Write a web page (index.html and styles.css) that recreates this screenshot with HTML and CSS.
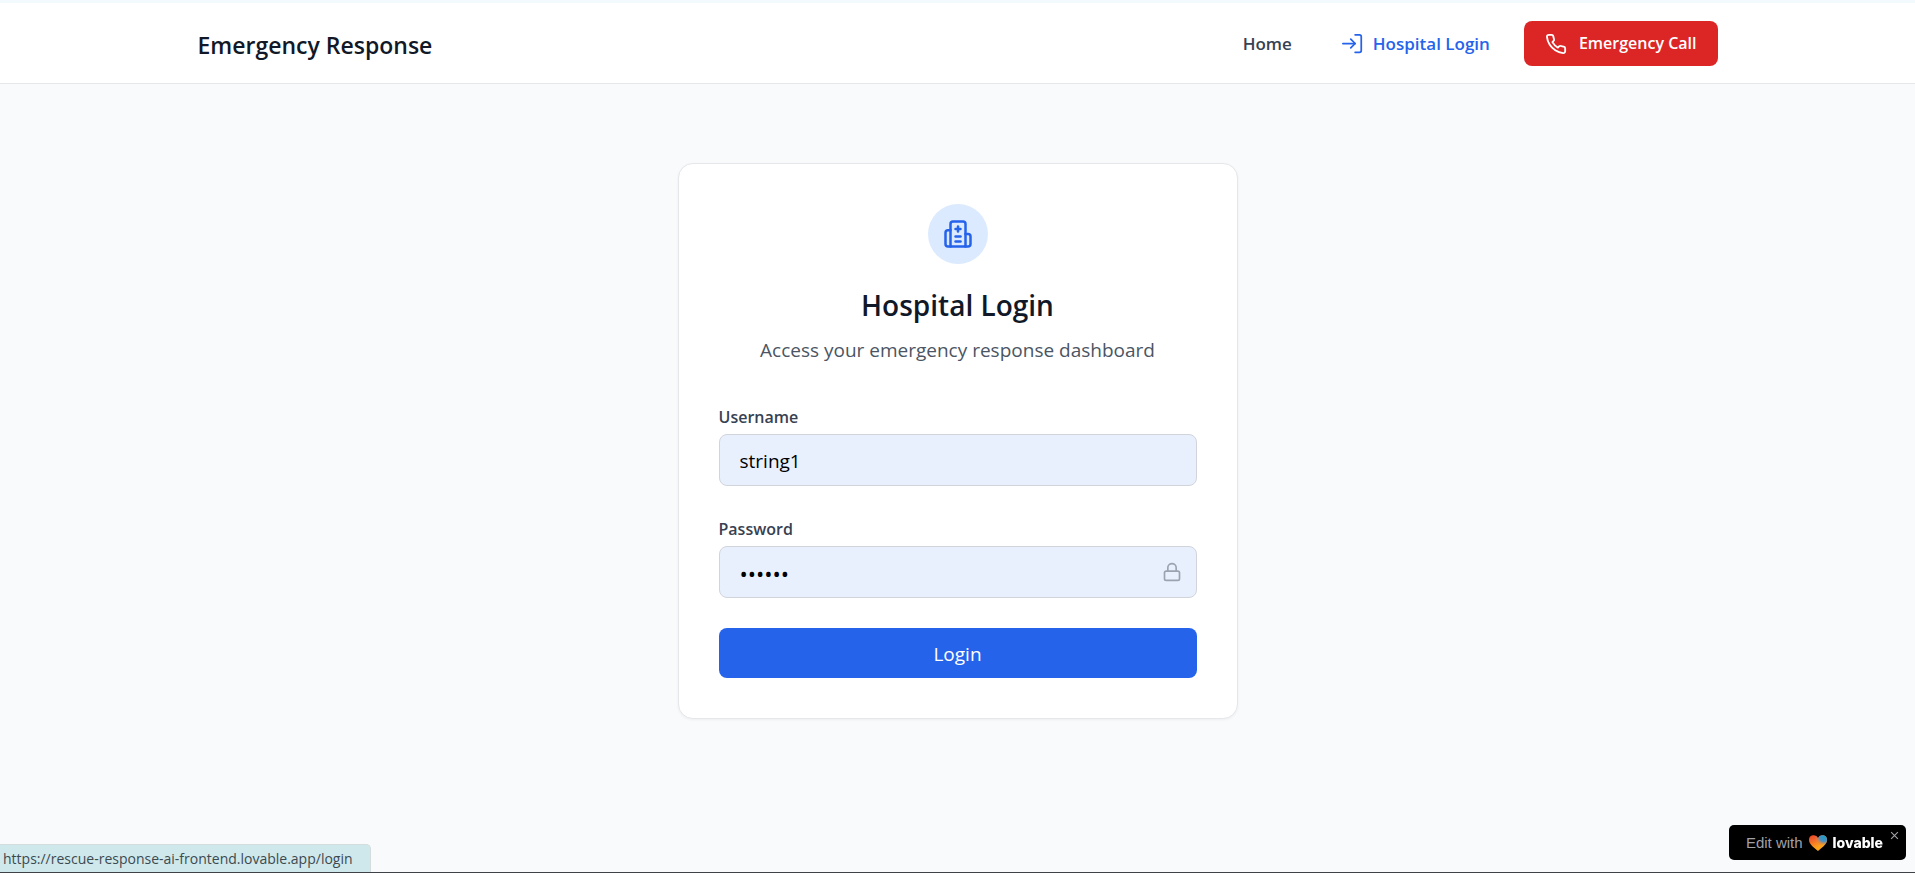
FILE: index.html
```html
<!DOCTYPE html>
<html lang="en">
<head>
<meta charset="utf-8">
<meta name="viewport" content="width=device-width, initial-scale=1">
<title>Hospital Login - Emergency Response</title>
<link rel="stylesheet" href="styles.css">
</head>
<body>
<header class="header">
  <div class="header-inner">
    <a class="brand" href="#">Emergency Response</a>
    <nav class="nav">
      <a class="nav-link" href="#">Home</a>
      <a class="nav-link nav-link-active" href="#">
        <svg class="icon icon-login" viewBox="0 0 24 24" aria-hidden="true"><path d="M15 2h5a2 2 0 0 1 2 2v16a2 2 0 0 1-2 2h-5"/><path d="m10 17 5-5-5-5"/><path d="M15 12H1"/></svg>
        <span>Hospital Login</span>
      </a>
      <button class="call-button" type="button">
        <svg class="icon icon-phone" viewBox="0 0 24 24" aria-hidden="true"><path d="M22 16.92v3a2 2 0 0 1-2.18 2 19.79 19.79 0 0 1-8.63-3.07 19.5 19.5 0 0 1-6-6 19.79 19.79 0 0 1-3.07-8.67A2 2 0 0 1 4.11 2h3a2 2 0 0 1 2 1.72 12.84 12.84 0 0 0 .7 2.81 2 2 0 0 1-.45 2.11L8.09 9.91a16 16 0 0 0 6 6l1.27-1.27a2 2 0 0 1 2.11-.45 12.84 12.84 0 0 0 2.81.7A2 2 0 0 1 22 16.92z"/></svg>
        <span>Emergency Call</span>
      </button>
    </nav>
  </div>
</header>
<main class="main">
  <section class="card">
    <div class="card-icon">
      <svg class="icon icon-hospital" viewBox="0 0 24 24" aria-hidden="true"><path d="M6 22V4a2 2 0 0 1 2-2h8a2 2 0 0 1 2 2v18Z"/><path d="M6 9H4a2 2 0 0 0-2 2v9a2 2 0 0 0 2 2h2"/><path d="M18 12h2a2 2 0 0 1 2 2v6a2 2 0 0 1-2 2h-2"/><path d="M10 14h4"/><path d="M10 18h4"/><path d="M12 6v4"/><path d="M10 8h4"/></svg>
    </div>
    <h1 class="card-title">Hospital Login</h1>
    <p class="card-text">Access your emergency response dashboard</p>
    <form class="form">
      <div class="field">
        <label class="label" for="username">Username</label>
        <input class="input" id="username" type="text" value="string1">
      </div>
      <div class="field">
        <label class="label" for="password">Password</label>
        <div class="input-wrap">
          <input class="input input-password" id="password" type="password" value="string">
          <svg class="icon icon-lock" viewBox="0 0 24 24" aria-hidden="true"><rect x="3" y="11" width="18" height="11" rx="2"/><path d="M7 11V7a5 5 0 0 1 10 0v4"/></svg>
        </div>
      </div>
      <button class="submit" type="button">Login</button>
    </form>
  </section>
</main>
<div class="status">https://rescue-response-ai-frontend.lovable.app/login</div>
<aside class="badge">
  <a class="badge-link" href="#">
    <span>Edit with</span>
    <svg class="heart" viewBox="0 0 18 16" aria-hidden="true">
      <defs>
        <linearGradient id="warm" x1="0" y1="0" x2="0.5" y2="1"><stop offset="0" stop-color="#ef4423"/><stop offset="0.3" stop-color="#f0602c"/><stop offset="0.8" stop-color="#fba21c"/></linearGradient>
        <radialGradient id="cool" gradientUnits="userSpaceOnUse" cx="15" cy="2" r="9"><stop offset="0" stop-color="#1d9fc4"/><stop offset="0.5" stop-color="#4d8fc0"/><stop offset="1" stop-color="#f08a4a" stop-opacity="0"/></radialGradient>
      </defs>
      <path fill="url(#warm)" d="M9 16C6 13.500 0 9.500 0 5a4.700 4.700 0 0 1 9-2 4.700 4.700 0 0 1 9 2c0 4.500-6 8.500-9 11Z"/>
      <path fill="url(#cool)" d="M9 16C6 13.500 0 9.500 0 5a4.700 4.700 0 0 1 9-2 4.700 4.700 0 0 1 9 2c0 4.500-6 8.500-9 11Z"/>
    </svg>
    <strong class="badge-name">lovable</strong>
  </a>
  <button class="badge-close" type="button" aria-label="Close"><svg class="close-icon" viewBox="0 0 8 8" aria-hidden="true"><path d="M1 1l6 6M7 1L1 7"/></svg></button>
</aside>
</body>
</html>
```
FILE: styles.css
```css
* {
  box-sizing: border-box;
}

body {
  margin: 0;
  min-height: 100vh;
  display: flex;
  flex-direction: column;
  background: #f9fafb;
  border-bottom: 1px solid #3f4347;
  color: #111827;
  font-family: "Open Sans", "Noto Sans", sans-serif;
}

a {
  color: inherit;
  text-decoration: none;
}

button,
input {
  font-family: inherit;
}

.icon {
  flex: none;
  fill: none;
  stroke: currentColor;
  stroke-width: 2;
  stroke-linecap: round;
  stroke-linejoin: round;
}

.header {
  background: #fff;
  border-top: 3px solid #f3fafd;
  border-bottom: 1px solid #e5e7eb;
}

.header-inner {
  display: flex;
  align-items: center;
  justify-content: space-between;
  max-width: 1600px;
  margin: 0 auto;
  padding: 18px 40px 17px;
}

.brand {
  padding-top: 3px;
  font-size: 23px;
  font-weight: 600;
  line-height: 35px;
}

.nav {
  display: flex;
  align-items: center;
}

.nav-link {
  display: flex;
  align-items: center;
  gap: 10px;
  margin-right: 50px;
  color: #374151;
  font-size: 17px;
  font-weight: 600;
  line-height: 25px;
}

.nav-link-active {
  margin-right: 34px;
  color: #2563eb;
}

.icon-login {
  width: 21px;
  height: 21px;
}

.call-button {
  display: flex;
  align-items: center;
  gap: 12px;
  padding: 10px 21px;
  border: 0;
  border-radius: 8px;
  background: #dc2626;
  color: #fff;
  font-size: 16px;
  font-weight: 600;
  line-height: 25px;
}

.icon-phone {
  width: 22px;
  height: 22px;
}

.main {
  flex: 1;
  padding: 79px 20px;
}

.card {
  max-width: 560px;
  margin: 0 auto;
  padding: 40px;
  background: #fff;
  border: 1px solid #e5e7eb;
  border-radius: 15px;
  box-shadow: 0 1px 3px rgba(0, 0, 0, 0.05);
}

.card-icon {
  display: flex;
  align-items: center;
  justify-content: center;
  width: 60px;
  height: 60px;
  margin: 0 auto 20px;
  border-radius: 50%;
  background: #dbeafe;
  color: #2563eb;
}

.icon-hospital {
  width: 30px;
  height: 30px;
}

.card-title {
  margin: 0 0 9px;
  font-size: 28px;
  font-weight: 600;
  line-height: 42px;
  text-align: center;
}

.card-text {
  margin: 0 0 39px;
  color: #4b5563;
  font-size: 19px;
  line-height: 30px;
  text-align: center;
}

.form {
  display: flex;
  flex-direction: column;
  gap: 30px;
}

.field {
  display: flex;
  flex-direction: column;
  gap: 4px;
}

.label {
  color: #374151;
  font-size: 16px;
  font-weight: 600;
  line-height: 26px;
}

.input {
  display: block;
  width: 100%;
  height: 52px;
  padding: 2px 20px 0;
  border: 1px solid #d1d5db;
  border-radius: 8px;
  background: #e8f0fe;
  color: #000;
  font-size: 19px;
}

.input-password {
  font-size: 22px;
}

.input-wrap {
  position: relative;
}

.icon-lock {
  position: absolute;
  top: 16px;
  right: 15px;
  width: 20px;
  height: 20px;
  color: #9ca3af;
}

.submit {
  padding: 11px 20px 9px;
  border: 0;
  border-radius: 8px;
  background: #2563eb;
  color: #fff;
  font-size: 19px;
  line-height: 30px;
}

.status {
  position: fixed;
  bottom: 1px;
  left: 0;
  padding: 0 17px 0 3px;
  border: 1px solid #d5dcde;
  border-width: 1px 1px 0 0;
  border-radius: 0 5px 0 0;
  background: #cfe8ec;
  color: #3c4a50;
  font-size: 14px;
  line-height: 27px;
}

.badge {
  position: fixed;
  right: 9px;
  bottom: 13px;
  display: flex;
  padding: 0 7px 0 17px;
  border-radius: 5px;
  background: #000;
  color: #a1a1aa;
  font-family: "Liberation Sans", Arial, sans-serif;
  font-size: 15px;
  line-height: 35px;
}

.badge-link {
  display: flex;
  align-items: center;
  gap: 6px;
}

.heart {
  width: 18px;
  height: 16px;
}

.badge-name {
  color: #fff;
  font-family: Inter, sans-serif;
  font-size: 14px;
  font-weight: 800;
}

.badge-close {
  align-self: flex-start;
  display: flex;
  margin: 6px 0 0 7px;
  padding: 0;
  border: 0;
  background: none;
}

.close-icon {
  width: 9px;
  height: 9px;
  fill: none;
  stroke: #a1a1aa;
  stroke-width: 1;
}
```
